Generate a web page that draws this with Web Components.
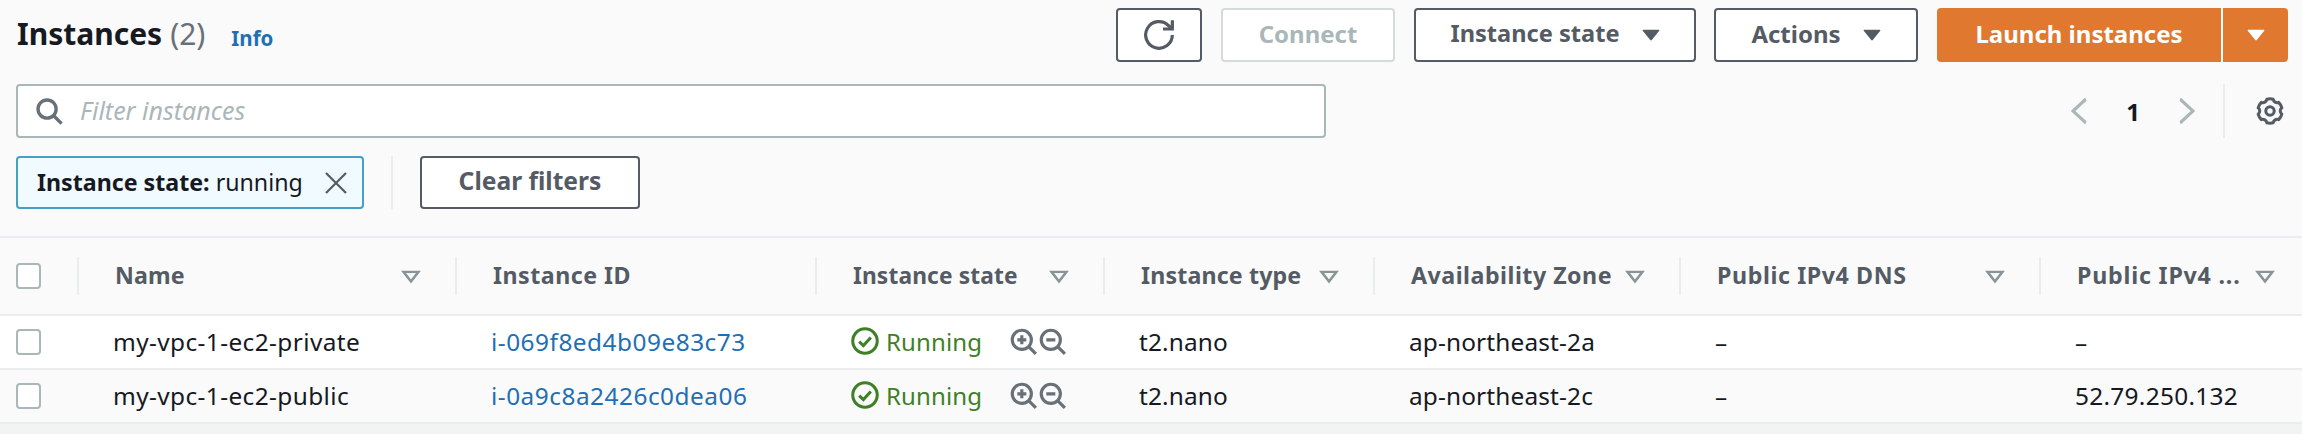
<!DOCTYPE html>
<html>
<head>
<meta charset="utf-8">
<title>Instances</title>
<style>
  html, body { margin: 0; height: 100%; background: #fafafa; overflow: hidden; }
  body { font: 24px "Noto Sans", sans-serif; color: #16191f; }
</style>
</head>
<body>
<ec2-page>
  <ec2-header slot="header">
    <span slot="title">Instances</span>
    <span slot="count">(2)</span>
    <span slot="info">Info</span>
    <aws-button slot="actions" style="--w:86px" icon><aws-icon name="refresh" style="--s:32px"></aws-icon></aws-button>
    <aws-button slot="actions" style="--w:174px" disabled>Connect</aws-button>
    <aws-button slot="actions" style="--w:282px;margin-right:-1px;font-size:23.6px" caret>Instance state</aws-button>
    <aws-button slot="actions" style="--w:204px" caret>Actions</aws-button>
    <aws-split-button slot="actions">Launch instances</aws-split-button>
  </ec2-header>
  <ec2-filter-row slot="filter">
    <ec2-search placeholder="Filter instances"></ec2-search>
    <ec2-pager slot="pager"></ec2-pager>
  </ec2-filter-row>
  <ec2-chips slot="chips">
    <aws-chip><b>Instance state:</b> running</aws-chip>
    <aws-button slot="clear" style="--w:220px;font-size:24.6px">Clear filters</aws-button>
  </ec2-chips>
  <ec2-table slot="table">
    <ec2-row head>
      <ec2-cell check></ec2-cell>
      <ec2-cell head filter>Name</ec2-cell>
      <ec2-cell head style="letter-spacing:.5px">Instance ID</ec2-cell>
      <ec2-cell head filter style="font-size:22.7px">Instance state</ec2-cell>
      <ec2-cell head filter>Instance type</ec2-cell>
      <ec2-cell head filter style="letter-spacing:.5px">Availability Zone</ec2-cell>
      <ec2-cell head filter style="letter-spacing:.6px">Public IPv4 DNS</ec2-cell>
      <ec2-cell head filter last style="letter-spacing:.8px">Public IPv4 ...</ec2-cell>
    </ec2-row>
    <ec2-row style="--row-bg:#fff">
      <ec2-cell check></ec2-cell>
      <ec2-cell style="letter-spacing:.4px">my-vpc-1-ec2-private</ec2-cell>
      <ec2-cell link>i-069f8ed4b09e83c73</ec2-cell>
      <ec2-cell><ec2-status>Running</ec2-status></ec2-cell>
      <ec2-cell>t2.nano</ec2-cell>
      <ec2-cell>ap-northeast-2a</ec2-cell>
      <ec2-cell>–</ec2-cell>
      <ec2-cell>–</ec2-cell>
    </ec2-row>
    <ec2-row>
      <ec2-cell check></ec2-cell>
      <ec2-cell style="letter-spacing:.4px">my-vpc-1-ec2-public</ec2-cell>
      <ec2-cell link>i-0a9c8a2426c0dea06</ec2-cell>
      <ec2-cell><ec2-status>Running</ec2-status></ec2-cell>
      <ec2-cell>t2.nano</ec2-cell>
      <ec2-cell>ap-northeast-2c</ec2-cell>
      <ec2-cell>–</ec2-cell>
      <ec2-cell style="letter-spacing:.3px">52.79.250.132</ec2-cell>
    </ec2-row>
  </ec2-table>
</ec2-page>

<script>
  const gearPath = () => {
    // six lobes round the centre, concave between them
    let d = "";
    for (let i = 0; i < 6; i++) {
      const a = (-90 + i * 60) * Math.PI / 180;
      const w = 15 * Math.PI / 180;
      const p1 = [12 + 10.5 * Math.cos(a - w), 12 + 10.5 * Math.sin(a - w)];
      const p2 = [12 + 10.5 * Math.cos(a + w), 12 + 10.5 * Math.sin(a + w)];
      d += `${i ? "A3.4 3.4 0 0 0" : "M"} ${p1[0].toFixed(2)} ${p1[1].toFixed(2)} A10.5 10.5 0 0 1 ${p2[0].toFixed(2)} ${p2[1].toFixed(2)} `;
    }
    const a = (-90 - 15) * Math.PI / 180;
    return d + `A3.4 3.4 0 0 0 ${(12 + 10.5 * Math.cos(a)).toFixed(2)} ${(12 + 10.5 * Math.sin(a)).toFixed(2)} Z`;
  };

  const ICONS = {
    search: `<circle cx="10" cy="10" r="7.5"/><path d="M15.5 15.5 22 22"/>`,
    refresh: `<path d="M15 7.5h7V1"/><path d="M22 12a10 10 0 1 1-2.9-7.1L22 7.5"/>`,
    close: `<path d="M2 2l20 20M22 2 2 22"/>`,
    left: `<path d="M21 1 3 12l18 11"/>`,
    right: `<path d="M3 1l18 11L3 23"/>`,
    caret: `<path d="M2 4h20L12 20z" fill="currentColor" stroke-linejoin="round"/>`,
    filter: `<path d="M3 4.5h18L12 20z" stroke-linejoin="miter"/>`,
    gear: `<path d="${gearPath()}" stroke-linejoin="round"/><circle cx="12" cy="12" r="3.6"/>`,
    status: `<circle cx="12" cy="12" r="10.5"/><path d="M7 12.5l3.6 3.4L17 9"/>`,
    zoomin: `<circle cx="10.5" cy="10.5" r="8.5"/><path d="M17 17l6 6M6.5 10.5h8M10.5 6.5v8" />`,
    zoomout: `<circle cx="10.5" cy="10.5" r="8.5"/><path d="M17 17l6 6M6.5 10.5h8"/>`,
  };

  class AwsIcon extends HTMLElement {
    connectedCallback() {
      const name = this.getAttribute("name");
      this.attachShadow({ mode: "open" }).innerHTML = `
        <style>
          :host { display: inline-flex; width: var(--s, 24px); height: var(--h, var(--s, 24px)); flex: none; }
          svg { width: 100%; height: 100%; fill: none; stroke: currentColor; stroke-width: var(--sw, 2.4); }
        </style>
        <svg viewBox="0 0 24 24" preserveAspectRatio="none">${ICONS[name]}</svg>
      `;
    }
  }
  customElements.define("aws-icon", AwsIcon);

  class AwsButton extends HTMLElement {
    constructor() {
      super();
      this.attachShadow({ mode: "open" }).innerHTML = `
        <style>
          :host {
            display: inline-flex;
            align-items: center;
            justify-content: center;
            gap: 22px;
            box-sizing: border-box;
            width: var(--w, auto);
            height: 54px;
            background: #fff;
            color: #545b64;
            border: 2px solid #545b64;
            border-radius: 4px;
            font-weight: 700;
            font-size: 24px;
            white-space: nowrap;
          }
          :host([disabled]) { color: #aab7b8; border-color: #d5dbdb; }
          span { display: flex; padding-bottom: 4px; }
          :host([icon]) span { padding-bottom: 0; }
          aws-icon { display: none; --s: 18px; --h: 14px; }
          :host([caret]) aws-icon { display: inline-flex; }
        </style>
        <span><slot></slot></span>
        <aws-icon name="caret"></aws-icon>
      `;
    }
  }
  customElements.define("aws-button", AwsButton);

  class AwsSplitButton extends HTMLElement {
    constructor() {
      super();
      this.attachShadow({ mode: "open" }).innerHTML = `
        <style>
          :host {
            display: inline-flex;
            height: 54px;
            background: #e0782f;
            color: #fff;
            border-radius: 4px;
            font-weight: 700;
            font-size: 24px;
            white-space: nowrap;
          }
          .main { display: flex; align-items: center; justify-content: center; width: 284px; padding-bottom: 4px; box-sizing: border-box; }
          .more { display: flex; align-items: center; justify-content: center; width: 67px; border-left: 2px solid #fff; box-sizing: border-box; }
          aws-icon { --s: 18px; --h: 14px; }
        </style>
        <div class="main"><slot></slot></div>
        <div class="more"><aws-icon name="caret"></aws-icon></div>
      `;
    }
  }
  customElements.define("aws-split-button", AwsSplitButton);

  class Ec2Header extends HTMLElement {
    constructor() {
      super();
      this.attachShadow({ mode: "open" }).innerHTML = `
        <style>
          :host { display: flex; align-items: center; justify-content: space-between; height: 54px; }
          .title { display: flex; align-items: center; gap: 8px; margin-left: 1px; padding-bottom: 3px; }
          .name { font-weight: 700; font-size: 30px; }
          .count { color: #687078; font-size: 30px; }
          .info { color: #1f6fb5; font-weight: 700; font-size: 20.5px; margin-left: 18px; margin-top: 9px; }
          .actions { display: flex; gap: 19px; }
        </style>
        <div class="title">
          <span class="name"><slot name="title"></slot></span>
          <span class="count"><slot name="count"></slot></span>
          <span class="info"><slot name="info"></slot></span>
        </div>
        <div class="actions"><slot name="actions"></slot></div>
      `;
    }
  }
  customElements.define("ec2-header", Ec2Header);

  class Ec2Search extends HTMLElement {
    constructor() {
      super();
      this.attachShadow({ mode: "open" }).innerHTML = `
        <style>
          :host {
            display: flex;
            align-items: center;
            gap: 16px;
            box-sizing: border-box;
            width: 1310px;
            height: 54px;
            padding-left: 17px;
            background: #fff;
            border: 2px solid #aab7b8;
            border-radius: 4px;
          }
          aws-icon { color: #687078; --s: 29px; --sw: 2.8; }
          span { color: #aab7b8; font-style: italic; font-size: 25px; padding-bottom: 2px; }
        </style>
        <aws-icon name="search"></aws-icon>
        <span></span>
      `;
      this.shadowRoot.querySelector("span").textContent = this.getAttribute("placeholder");
    }
  }
  customElements.define("ec2-search", Ec2Search);

  class Ec2Pager extends HTMLElement {
    constructor() {
      super();
      this.attachShadow({ mode: "open" }).innerHTML = `
        <style>
          :host { display: flex; align-items: center; height: 54px; }
          .chev { color: #aab7b8; --s: 17px; --h: 26px; --sw: 3.4; }
          .num { width: 90px; text-align: center; font-weight: 700; font-size: 24px; }
          .gear { display: flex; align-items: center; width: 65px; height: 54px; margin-left: 28px; padding-left: 31px; border-left: 2px solid #eaeded; box-sizing: border-box; color: #545b64; }
          .gear aws-icon { --s: 28px; --sw: 2.6; }
        </style>
        <aws-icon class="chev" name="left"></aws-icon>
        <span class="num">1</span>
        <aws-icon class="chev" name="right"></aws-icon>
        <div class="gear"><aws-icon name="gear"></aws-icon></div>
      `;
    }
  }
  customElements.define("ec2-pager", Ec2Pager);

  class Ec2FilterRow extends HTMLElement {
    constructor() {
      super();
      this.attachShadow({ mode: "open" }).innerHTML = `
        <style>
          :host { display: flex; justify-content: space-between; }
        </style>
        <slot></slot>
        <slot name="pager"></slot>
      `;
    }
  }
  customElements.define("ec2-filter-row", Ec2FilterRow);

  class AwsChip extends HTMLElement {
    constructor() {
      super();
      this.attachShadow({ mode: "open" }).innerHTML = `
        <style>
          :host {
            display: flex;
            align-items: center;
            justify-content: space-between;
            box-sizing: border-box;
            width: 348px;
            height: 53px;
            padding: 0 14px 0 19px;
            background: #f1faff;
            border: 2px solid #44a0c8;
            border-radius: 4px;
            font-size: 23.2px;
            white-space: nowrap;
          }
          span { padding-bottom: 2px; }
          aws-icon { color: #545b64; --s: 24px; --sw: 2.2; }
        </style>
        <span><slot></slot></span>
        <aws-icon name="close"></aws-icon>
      `;
    }
  }
  customElements.define("aws-chip", AwsChip);

  class Ec2Chips extends HTMLElement {
    constructor() {
      super();
      this.attachShadow({ mode: "open" }).innerHTML = `
        <style>
          :host { display: flex; align-items: center; height: 53px; }
          .sep { width: 2px; height: 53px; margin: 0 27px; background: #eaeded; }
          ::slotted(aws-button) { height: 53px; }
        </style>
        <slot></slot>
        <div class="sep"></div>
        <slot name="clear"></slot>
      `;
    }
  }
  customElements.define("ec2-chips", Ec2Chips);

  class Ec2Status extends HTMLElement {
    constructor() {
      super();
      this.attachShadow({ mode: "open" }).innerHTML = `
        <style>
          :host { display: flex; align-items: center; color: #3f7f26; }
          .ok { --s: 28px; --sw: 2.6; margin-right: 7px; }
          span { font-size: 24px; }
          .zoom { color: #687078; --s: 27px; --sw: 2.8; }
          .in { margin-left: 28px; margin-right: 2px; }
        </style>
        <aws-icon class="ok" name="status"></aws-icon>
        <span><slot></slot></span>
        <aws-icon class="zoom in" name="zoomin"></aws-icon>
        <aws-icon class="zoom" name="zoomout"></aws-icon>
      `;
    }
  }
  customElements.define("ec2-status", Ec2Status);

  class Ec2Cell extends HTMLElement {
    constructor() {
      super();
      this.attachShadow({ mode: "open" }).innerHTML = `
        <style>
          :host {
            display: flex;
            align-items: center;
            justify-content: space-between;
            box-sizing: border-box;
            padding: 0 34px 0 36px;
            min-width: 0;
            white-space: nowrap;
            font-size: 24.4px;
            letter-spacing: .15px;
          }
          :host([link]) { color: #1f6fb5; letter-spacing: .5px; }
          :host([head]) {
            color: #545b64;
            font-weight: 700;
            font-size: 23.2px;
            height: 38px;
            align-self: center;
            border-left: 2px solid #eaeded;
          }
          :host([last]) { padding-right: 27px; }
          :host([check]) { padding: 0 0 0 16px; }
          .text { padding-bottom: 2px; }
          .box { display: none; box-sizing: border-box; width: 25px; height: 26px; background: #fff; border: 2px solid #aab7b8; border-radius: 4px; }
          :host([check]) .box { display: block; }
          aws-icon { display: none; color: #879596; --s: 20px; --h: 15px; --sw: 3.4; }
          :host([filter]) aws-icon { display: inline-flex; }
        </style>
        <div class="box"></div>
        <span class="text"><slot></slot></span>
        <aws-icon name="filter"></aws-icon>
      `;
    }
  }
  customElements.define("ec2-cell", Ec2Cell);

  class Ec2Row extends HTMLElement {
    constructor() {
      super();
      this.attachShadow({ mode: "open" }).innerHTML = `
        <style>
          :host {
            display: grid;
            grid-template-columns: 77px 378px 360px 288px 270px 306px 360px 263px;
            height: 52px;
            background: var(--row-bg, #fafafa);
            border-bottom: 2px solid #eaeded;
          }
          :host([head]) { height: 76px; }
        </style>
        <slot></slot>
      `;
    }
  }
  customElements.define("ec2-row", Ec2Row);

  class Ec2Table extends HTMLElement {
    constructor() {
      super();
      this.attachShadow({ mode: "open" }).innerHTML = `
        <style>
          :host { display: block; border-top: 2px solid #eaeded; }
        </style>
        <slot></slot>
      `;
    }
  }
  customElements.define("ec2-table", Ec2Table);

  class Ec2Page extends HTMLElement {
    constructor() {
      super();
      this.attachShadow({ mode: "open" }).innerHTML = `
        <style>
          :host { display: flex; flex-direction: column; height: 434px; background: #f2f3f3; }
          .top { display: flex; flex-direction: column; padding: 8px 14px 27px 16px; background: #fafafa; }
          .filter { margin-top: 22px; }
          .chips { margin-top: 18px; }
        </style>
        <div class="top">
          <slot name="header"></slot>
          <div class="filter"><slot name="filter"></slot></div>
          <div class="chips"><slot name="chips"></slot></div>
        </div>
        <slot name="table"></slot>
      `;
    }
  }
  customElements.define("ec2-page", Ec2Page);
</script>
</body>
</html>
